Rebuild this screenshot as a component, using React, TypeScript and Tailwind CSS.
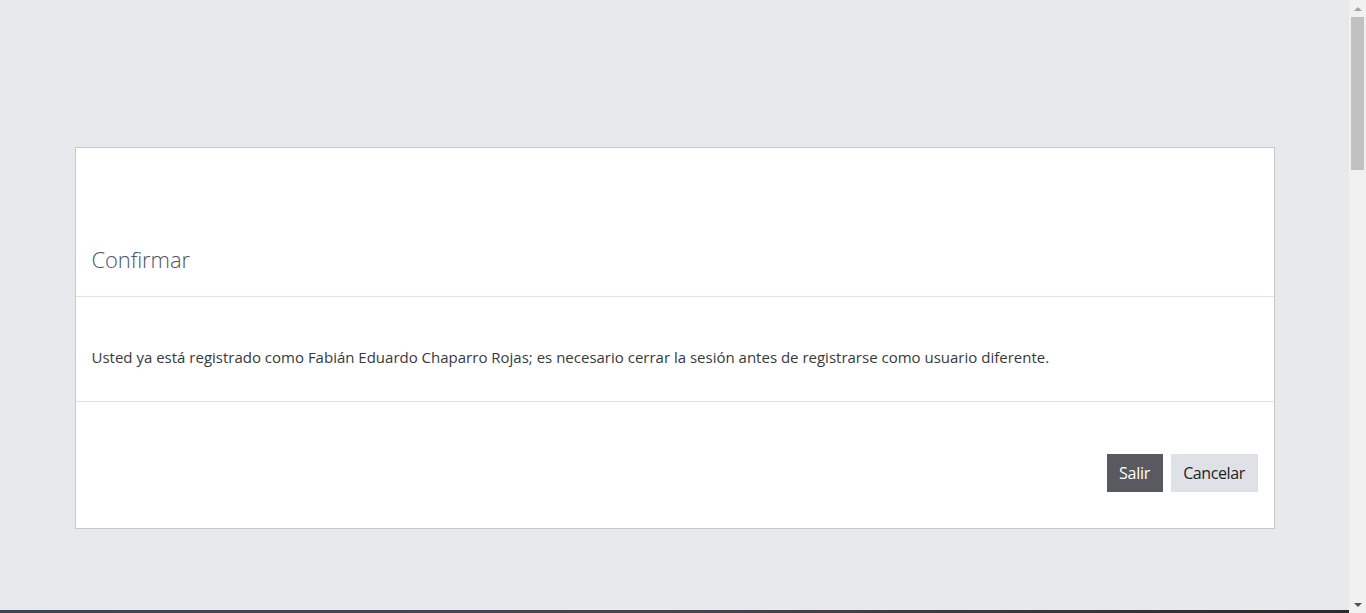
import React from "react";

function Scrollbar() {
    return <div className="w-[17px] h-full bg-[#f1f1f1] flex flex-col items-center">
        <div className="h-[17px] w-full flex items-center justify-center">
            <div className="w-0 h-0 border-l-[4px] border-r-[4px] border-b-[4px] border-l-transparent border-r-transparent border-b-[#a3a3a3]"/>
        </div>
        <div className="w-[13px] h-[153px] bg-[#c1c1c1]"/>
        <div className="flex-1"/>
        <div className="h-[17px] w-full flex items-center justify-center">
            <div className="w-0 h-0 border-l-[4px] border-r-[4px] border-t-[4px] border-l-transparent border-r-transparent border-t-[#505050]"/>
        </div>
    </div>
}

export default function App() {
    return <div className="w-[1366px] h-[613px] flex bg-[#e7eaed] overflow-hidden"
                style={{fontFamily: '"Open Sans", "Noto Sans", sans-serif'}}>
        <div className="flex-1 flex flex-col">
            <div className="flex-1 pt-[147px]">
                <div className="w-[1200px] mx-auto bg-white border border-[#c6c8ca]">
                    <div className="h-[149px] px-4 pb-[20px] flex items-end border-b border-[#dee2e6]">
                        <h5 className="text-[22px] leading-[34px] font-light text-[#4c5566] tracking-[-0.1px]">Confirmar</h5>
                    </div>
                    <div className="h-[105px] px-4 pt-[50px] border-b border-[#dee2e6]">
                        <p className="text-[15px] leading-[20px] text-[#373a3c]">
                            Usted ya está registrado como Fabián Eduardo Chaparro Rojas; es necesario cerrar la sesión antes de registrarse como usuario diferente.
                        </p>
                    </div>
                    <div className="h-[126px] px-4 pt-[52px] flex justify-end items-start gap-2">
                        <button className="h-[38px] w-[56px] bg-[#595a60] text-white text-[16px] tracking-[-0.3px]">Salir</button>
                        <button className="h-[38px] w-[87px] bg-[#dee1e6] text-[#1d2125] text-[16px] tracking-[-0.4px]">Cancelar</button>
                    </div>
                </div>
            </div>
            <div className="h-[3px] bg-gradient-to-r from-[#3d4550] via-[#4a4450] to-[#2b2b2b]"/>
        </div>
        <Scrollbar/>
    </div>
}
